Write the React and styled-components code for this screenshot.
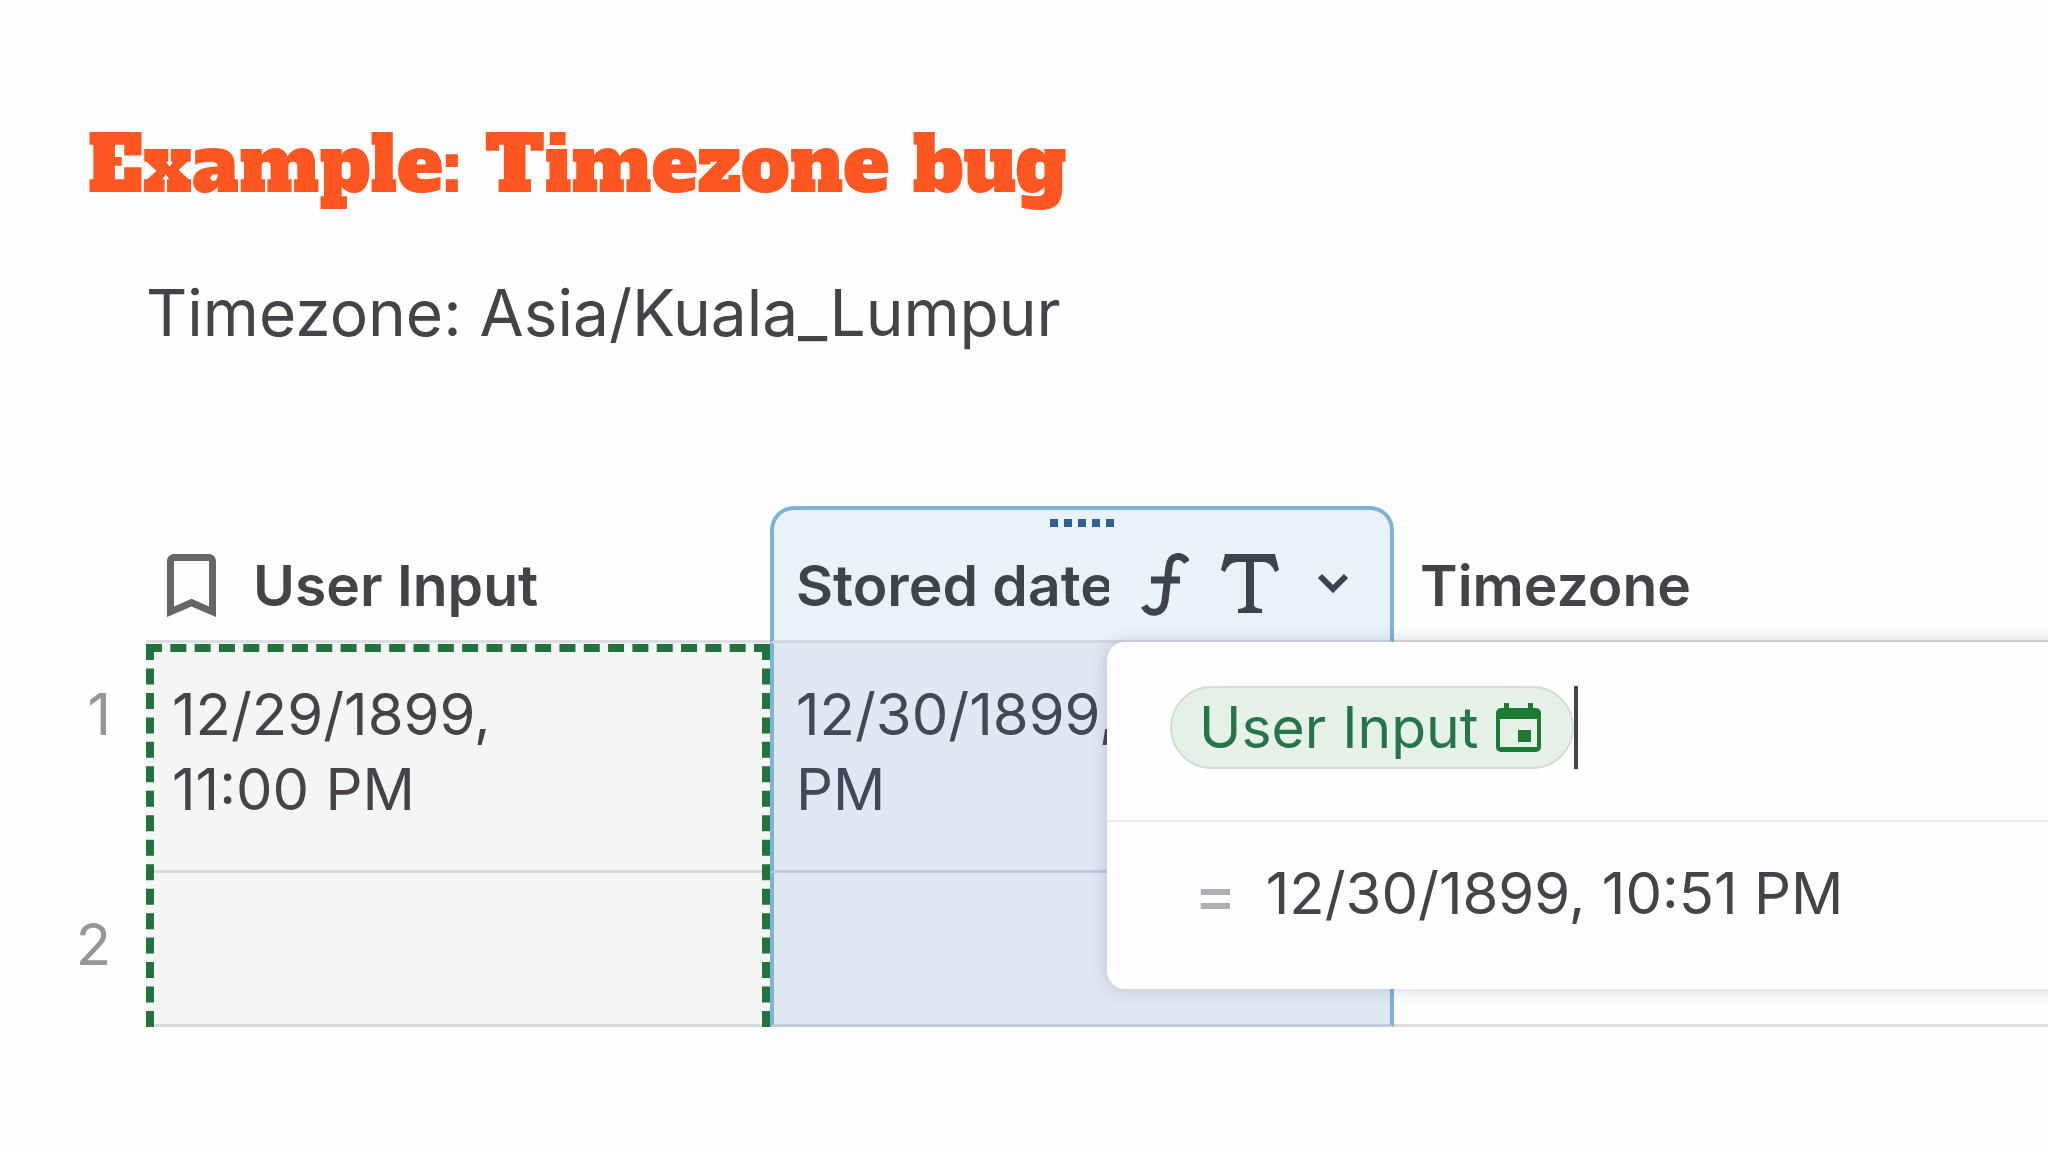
// Library& Package -----------------------------------------
import styled, { createGlobalStyle, css } from 'styled-components';

// Icons ----------------------------------------------------
const BookmarkIcon = () => (
  <svg width="49" height="63" viewBox="5 3 14 18" fill="#666567" aria-hidden="true">
    <path d="M17 3H7c-1.1 0-2 .9-2 2v16l7-3 7 3V5c0-1.1-.9-2-2-2zm0 15-5-2.180L7 18V5h10v13z" />
  </svg>
)

const FormulaIcon = () => (
  <svg width="48" height="64" viewBox="0 0 48 64" fill="none" stroke="#3f424e" strokeWidth="7" aria-hidden="true">
    <path d="M46 10C41 2 29 2 28 15L24 49C22 62 9 64 3 54" />
    <path d="M10 28H39" />
  </svg>
)

const TextIcon = () => (
  <svg width="58" height="60" viewBox="0 0 58 60" fill="#3f424e" aria-hidden="true">
    <path d="M4 0H54L58 16L54 18Q50 8 42 8H33V51Q33 54 41 55V59H17V55Q25 54 25 51V8H16Q8 8 4 18L0 16Z" />
  </svg>
)

const ChevronIcon = () => (
  <svg width="32" height="22" viewBox="0 0 32 22" fill="none" stroke="#3f424e" strokeWidth="6" aria-hidden="true">
    <path d="M3 3L16 16L29 3" />
  </svg>
)

const CalendarIcon = () => (
  <svg width="45" height="49" viewBox="0 0 45 49" aria-hidden="true">
    <path
      fill="#1d7a35"
      fillRule="evenodd"
      d="M8 0h5v5h19V0h5v5h3a5 5 0 0 1 5 5v34a5 5 0 0 1-5 5H5a5 5 0 0 1-5-5V10a5 5 0 0 1 5-5h3zM4 16v28h37V16z"
    />
    <rect x="22" y="27" width="13" height="12" fill="#1d7a35" />
  </svg>
)

const rows = [
  { id: 1, input: '12/29/1899, 11:00 PM', stored: '12/30/1899, 10:51 PM' },
  { id: 2, input: '', stored: '' },
]

export default function App(){
  return <>
  <GlobalStyle />
  <Main>
    <Title>Example: Timezone bug</Title>
    <Subtitle>Timezone: Asia/Kuala_Lumpur</Subtitle>

    <SheetWrap>
      <Sheet>
        <colgroup>
          <Col $width={146} />
          <Col $width={624} />
          <Col $width={624} />
          <col />
        </colgroup>
        <thead>
          <tr>
            <GutterHead />
            <HeadCell>
              <HeadContent $icon>
                <BookmarkIcon />
                User Input
              </HeadContent>
            </HeadCell>
            <HeadCell $active>
              <Grip>
                <i /><i /><i /><i /><i />
              </Grip>
              <HeadContent $active>
                <HeadLabel>Stored date</HeadLabel>
                <HeadTools>
                  <FormulaIcon />
                  <TextIcon />
                  <MenuButton type="button" aria-label="Column menu">
                    <ChevronIcon />
                  </MenuButton>
                </HeadTools>
              </HeadContent>
            </HeadCell>
            <HeadCell>
              <HeadContent>Timezone</HeadContent>
            </HeadCell>
          </tr>
        </thead>
        <tbody>
          {rows.map((row) => (
            <tr key={row.id}>
              <RowNumber scope="row">{row.id}</RowNumber>
              <Cell $tone="source"><CellText>{row.input}</CellText></Cell>
              <Cell $tone="active">{row.stored}</Cell>
              <Cell />
            </tr>
          ))}
        </tbody>
      </Sheet>

      <SourceOutline />

      <FormulaPopup>
        <FormulaLine>
          <Chip>
            User Input
            <CalendarIcon />
          </Chip>
          <Caret />
        </FormulaLine>
        <ResultLine>
          <Equals>=</Equals>
          <output>12/30/1899, 10:51 PM</output>
        </ResultLine>
      </FormulaPopup>
    </SheetWrap>
  </Main>
  </>
}

// Styled Components -----------------------------------------
const GlobalStyle = createGlobalStyle`
  *{
    box-sizing: border-box;
  }
  body{
    margin: 0;
    background: #fefefe;
    color: #454348;
    font-family: Inter, "Liberation Sans", sans-serif;
    overflow-x: hidden;
  }
`

const Main = styled.main`
  padding-top: 113px;
`

const Title = styled.h1`
  margin: 0;
  padding-left: 88px;
  color: #ff5722;
  font-family: "Alfa Slab One", "DejaVu Serif", serif;
  font-size: 77px;
  font-weight: 400;
  line-height: 104px;
  white-space: nowrap;
`

const Subtitle = styled.p`
  margin: 56px 0 0;
  padding-left: 146px;
  font-size: 64px;
  line-height: 80px;
  white-space: nowrap;
`

const SheetWrap = styled.section`
  position: relative;
  margin-top: 153px;
  overflow: hidden;
`

const Sheet = styled.table`
  width: 100%;
  table-layout: fixed;
  border-collapse: separate;
  border-spacing: 0;
  font-size: 58px;
  line-height: 75px;
`

const Col = styled.col`
  width: ${({ $width }) => $width}px;
`

const GutterHead = styled.td`
  padding: 0;
`

const HeadCell = styled.th`
  position: relative;
  height: 137px;
  padding: 0;
  border-bottom: 3px solid #dcdfe1;
  font-size: 57px;
  font-weight: 600;
  text-align: left;
  vertical-align: top;
  white-space: nowrap;
  ${({ $active }) => $active && css`
    border: 4px solid #7db3d7;
    border-bottom: 3px solid #d3d8e1;
    border-radius: 24px 24px 0 0;
    background: #eaf3fa;
    color: #3d454c;
  `}
`

const HeadContent = styled.div`
  display: flex;
  align-items: center;
  gap: ${({ $icon }) => ($icon ? '37px' : '32px')};
  height: 75px;
  margin-top: ${({ $active }) => ($active ? '38px' : '42px')};
  padding-left: ${({ $icon, $active }) => ($icon ? '21px' : $active ? '22px' : '26px')};
`

const HeadLabel = styled.span`
  flex: 1;
  min-width: 0;
  overflow: hidden;
`

const HeadTools = styled.span`
  display: flex;
  align-items: center;
  gap: 32px;
  padding: 0 41px 4px 0;
`

const MenuButton = styled.button`
  display: flex;
  padding: 0 0 0 6px;
  border: 0;
  background: none;
  cursor: pointer;
`

const Grip = styled.span`
  position: absolute;
  top: 9px;
  left: 0;
  right: 0;
  display: flex;
  justify-content: center;
  gap: 6px;

  i{
    width: 8px;
    height: 8px;
    background: #31608f;
  }
`

const RowNumber = styled.th`
  padding: 34px 35px 0 0;
  color: #97959a;
  font-weight: 400;
  text-align: right;
  vertical-align: top;
`

const tones = {
  source: css`
    border-bottom-color: #d6dad9;
    background: #f3f6f5;
  `,
  active: css`
    border-bottom-color: #c3cada;
    border-left: 4px solid #7db3d7;
    border-right: 4px solid #7db3d7;
    background: #e0e8f4;
    color: #444757;
  `,
}

const Cell = styled.td`
  height: 154px;
  padding: 34px 22px 43px 22px;
  border-bottom: 3px solid #dddde0;
  vertical-align: top;
  ${({ $tone }) => tones[$tone]}
`

const CellText = styled.div`
  max-width: 420px;
  padding-left: 4px;
`

const SourceOutline = styled.div`
  position: absolute;
  top: 138px;
  bottom: 0;
  left: 146px;
  width: 624px;
  border: 8px dashed #23733f;
  border-bottom: 0;
  pointer-events: none;
`

const FormulaPopup = styled.div`
  position: absolute;
  top: 136px;
  left: 1107px;
  right: -24px;
  border-radius: 18px;
  background: #fefefe;
  box-shadow: 0 0 18px rgba(40, 40, 70, 0.2);
  font-size: 58px;
  line-height: 75px;
  white-space: nowrap;
`

const FormulaLine = styled.div`
  display: flex;
  padding: 44px 0 51px 63px;
  border-bottom: 2px solid #ebebee;
`

const Chip = styled.span`
  display: flex;
  align-items: center;
  gap: 18px;
  height: 83px;
  padding: 0 31px 0 27px;
  border: 2px solid #d3dbd5;
  border-radius: 42px;
  background: #e6f1e8;
  color: #26744a;
  font-size: 57px;
`

const Caret = styled.span`
  width: 4px;
  height: 83px;
  background: #454545;
`

const ResultLine = styled.div`
  display: flex;
  gap: 29px;
  padding: 34px 0 58px 87px;
`

const Equals = styled.span`
  color: #b0aeb3;
  font-size: 64px;
  font-weight: 500;
`
